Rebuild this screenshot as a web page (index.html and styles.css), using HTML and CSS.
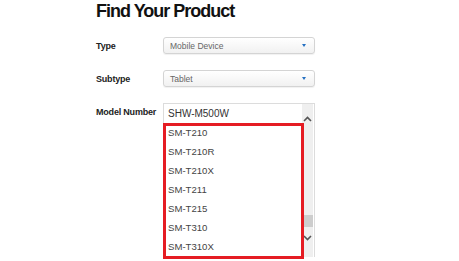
FILE: index.html
```html
<!DOCTYPE html>
<html lang="en">
<head>
    <meta charset="UTF-8">
    <title>Find Your Product</title>
    <link rel="stylesheet" href="styles.css">
</head>
<body>
    <div class="finder">
        <h1>Find Your Product</h1>

        <div class="field">
            <label>Type</label>
            <div class="select">
                <span>Mobile Device</span>
                <span class="caret"></span>
            </div>
        </div>

        <div class="field">
            <label>Subtype</label>
            <div class="select">
                <span>Tablet</span>
                <span class="caret"></span>
            </div>
        </div>

        <div class="field model-field">
            <label>Model Number</label>
            <div class="listbox">
                <ul class="options">
                    <li>SHW-M500W</li>
                    <li>SM-T210</li>
                    <li>SM-T210R</li>
                    <li>SM-T210X</li>
                    <li>SM-T211</li>
                    <li>SM-T215</li>
                    <li>SM-T310</li>
                    <li>SM-T310X</li>
                </ul>
                <div class="scrollbar">
                    <svg class="chev" width="9" height="6" viewBox="0 0 9 6"><path d="M1 5 L4.5 1.5 L8 5" fill="none" stroke="#555" stroke-width="1.6"/></svg>
                    <div class="thumb"></div>
                    <svg class="chev" width="9" height="6" viewBox="0 0 9 6"><path d="M1 1 L4.5 4.5 L8 1" fill="none" stroke="#555" stroke-width="1.6"/></svg>
                </div>
                <!-- highlight box drawn over the list -->
                <div class="highlight"></div>
            </div>
        </div>
    </div>
</body>
</html>
```

FILE: styles.css
```css
body {
    margin: 0;
    padding: 0;
    background-color: white;
    font-family: 'Liberation Sans', Arial, sans-serif;
    overflow: hidden;
}

.finder {
    padding-left: 96px;
}

.finder h1 {
    margin: 0 0 15px 0;
    font-size: 18px;
    line-height: 22px;
    letter-spacing: -1px;
    color: #111;
}

.field {
    display: grid;
    grid-template-columns: 67px 152px;
    align-items: center;
    margin-bottom: 16px;
}

.field label {
    font-size: 9px;
    font-weight: bold;
    letter-spacing: -0.2px;
    color: #222;
}

.select {
    height: 17px;
    box-sizing: border-box;
    border: 1px solid #d4d4d4;
    border-radius: 3px;
    background: linear-gradient(#ffffff, #f1f1f1);
    box-shadow: 0 1px 1px rgba(0, 0, 0, 0.06);
    display: flex;
    align-items: center;
    justify-content: space-between;
    padding: 0 8px 0 6px;
    font-size: 8.5px;
    color: #666;
}

.caret {
    width: 0;
    height: 0;
    border-left: 2.5px solid transparent;
    border-right: 2.5px solid transparent;
    border-top: 3px solid #2570c2;
}

.model-field {
    align-items: start;
}

.model-field label {
    line-height: 19px;
}

.listbox {
    position: relative;
    height: 154px;
    box-sizing: border-box;
    border: 1px solid #dcdcdc;
    border-bottom: none;
    display: flex;
}

.options {
    list-style: none;
    margin: 0;
    padding: 0 0 0 4px;
    flex: 1;
}

.options li {
    height: 19px;
    line-height: 19px;
    font-size: 9.6px;
    color: #444;
}

.options li:first-child {
    font-size: 10px;
    color: #333;
}

.scrollbar {
    width: 11px;
    background-color: #efefef;
    display: flex;
    flex-direction: column;
    align-items: center;
    padding: 12px 0 12px 0;
    margin-right: 1px;
}

.chev {
    display: block;
}

.thumb {
    width: 100%;
    height: 12px;
    background-color: #cdcdcd;
    margin: 93px 0 8px 0;
}

.highlight {
    position: absolute;
    left: -1px;
    top: 19px;
    width: 141px;
    height: 136px;
    box-sizing: border-box;
    border: 3px solid #e51c23;
    pointer-events: none;
}
```
